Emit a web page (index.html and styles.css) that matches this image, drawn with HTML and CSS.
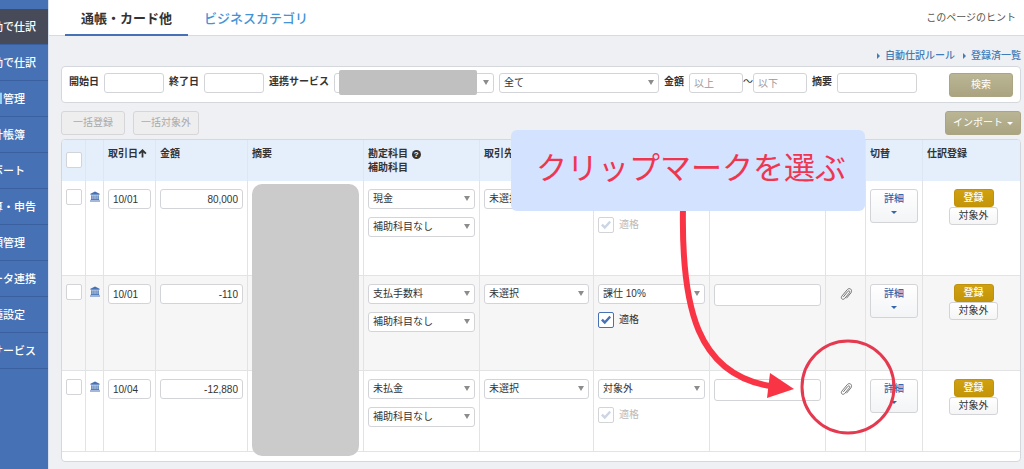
FILE: index.html
```html
<!DOCTYPE html>
<html lang="ja">
<head>
<meta charset="utf-8">
<title>自動で仕訳</title>
<link rel="stylesheet" href="styles.css">
</head>
<body>
<svg class="defs" aria-hidden="true">
  <symbol id="bank" viewBox="0 0 12 12"><path d="M6 0 11.500 2.600V4H.5V2.600zM1.500 4.500h1.600v4.700H1.500zM4 4.500h1.500v4.700H4zM6.500 4.500H8v4.700H6.500zM8.900 4.500h1.600v4.700H8.900zM1 9.400h10v.9H1zM0 10.800h12V12H0z"/></symbol>
  <symbol id="clip" viewBox="0 0 16 16"><path d="M5.600 10.600 9.800 5.400c1.200-1.300 2.700-.1 1.700 1.300l-4.800 5.800c-1.800 2-4.500 0-2.900-2.300l5.500-6.600c2.300-2.500 5.600.2 3.700 3.200l-4.300 5.200" fill="none" stroke="currentColor" stroke-width="1" stroke-linecap="round"/></symbol>
</svg>
<div class="app">
  <aside class="sidebar">
    <nav class="menu">
      <a class="menu-item active" href="#">自動で仕訳</a>
      <a class="menu-item" href="#">手動で仕訳</a>
      <a class="menu-item" href="#">取引管理</a>
      <a class="menu-item" href="#">会計帳簿</a>
      <a class="menu-item" href="#">レポート</a>
      <a class="menu-item" href="#">決算・申告</a>
      <a class="menu-item" href="#">書類管理</a>
      <a class="menu-item" href="#">データ連携</a>
      <a class="menu-item" href="#">各種設定</a>
      <a class="menu-item" href="#">他サービス</a>
    </nav>
  </aside>
  <main class="main">
    <header class="header">
      <nav class="tabs">
        <a class="tab current" href="#">通帳・カード他</a>
        <a class="tab" href="#">ビジネスカテゴリ</a>
      </nav>
      <a class="hint" href="#">このページのヒント</a>
    </header>
    <div class="content">
      <div class="links">
        <a href="#">自動仕訳ルール</a>
        <a href="#">登録済一覧</a>
      </div>
      <form class="panel filter">
        <label for="from">開始日</label><input class="field date-range" id="from" type="text">
        <label for="to">終了日</label><input class="field date-range" id="to" type="text">
        <label for="service">連携サービス</label>
        <span class="select wide"><select id="service"><option></option></select><span class="mask"></span></span>
        <span class="select wide"><select aria-label="口座"><option>全て</option></select></span>
        <label for="min">金額</label>
        <span class="range"><input class="field amount-range" id="min" type="text" placeholder="以上"><span>〜</span><input class="field amount-range" type="text" placeholder="以下" aria-label="金額以下"></span>
        <label for="summary">摘要</label><input class="field summary" id="summary" type="text">
        <button class="btn khaki search" type="button">検索</button>
      </form>
      <div class="toolbar">
        <button class="btn muted" type="button" disabled>一括登録</button>
        <button class="btn muted" type="button" disabled>一括対象外</button>
        <button class="btn khaki import" type="button">インポート<span class="caret"></span></button>
      </div>
      <div class="panel entries">
        <table>
          <colgroup><col class="c-check"><col class="c-icon"><col class="c-date"><col class="c-amount"><col><col class="c-wide"><col class="c-partner"><col class="c-wide"><col class="c-wide"><col class="c-clip"><col class="c-switch"><col class="c-register"></colgroup>
          <thead>
            <tr>
              <th class="check-head"><input class="check" type="checkbox" aria-label="全て選択"></th>
              <th></th>
              <th>取引日<svg class="sort" viewBox="0 0 10 10"><path d="M5 9.500V1.500M1.200 5.200 5 1.400l3.800 3.800" fill="none" stroke="currentColor" stroke-width="2"/></svg></th>
              <th>金額</th>
              <th>摘要</th>
              <th>勘定科目 <span class="help">?</span><br>補助科目</th>
              <th>取引先</th>
              <th></th>
              <th></th>
              <th></th>
              <th>切替</th>
              <th>仕訳登録</th>
            </tr>
          </thead>
          <tbody>
            <tr>
              <td><input class="check" type="checkbox" aria-label="選択"></td>
              <td class="center"><svg class="bank"><use href="#bank"/></svg></td>
              <td><input class="field" type="text" value="10/01" aria-label="取引日"></td>
              <td><input class="field number" type="text" value="80,000" aria-label="金額"></td>
              <td class="masked"><span class="summary-mask"></span></td>
              <td><div class="stack"><span class="select"><select aria-label="勘定科目"><option>現金</option></select></span><span class="select"><select aria-label="補助科目"><option>補助科目なし</option></select></span></div></td>
              <td><span class="select"><select aria-label="取引先"><option>未選択</option></select></span></td>
              <td><div class="stack"><span class="select"><select aria-label="税区分"><option></option></select></span><label class="eligible"><input class="check" type="checkbox" checked disabled>適格</label></div></td>
              <td><input class="field memo" type="text" aria-label="備考"></td>
              <td class="center"><button class="clip" type="button" aria-label="添付"><svg><use href="#clip"/></svg></button></td>
              <td><button class="detail" type="button">詳細<span class="caret"></span></button></td>
              <td class="center"><div class="actions"><button class="register" type="button">登録</button><button class="exclude" type="button">対象外</button></div></td>
            </tr>
            <tr>
              <td><input class="check" type="checkbox" aria-label="選択"></td>
              <td class="center"><svg class="bank"><use href="#bank"/></svg></td>
              <td><input class="field" type="text" value="10/01" aria-label="取引日"></td>
              <td><input class="field number" type="text" value="-110" aria-label="金額"></td>
              <td></td>
              <td><div class="stack"><span class="select"><select aria-label="勘定科目"><option>支払手数料</option></select></span><span class="select"><select aria-label="補助科目"><option>補助科目なし</option></select></span></div></td>
              <td><span class="select"><select aria-label="取引先"><option>未選択</option></select></span></td>
              <td><div class="stack"><span class="select"><select aria-label="税区分"><option>課仕 10%</option></select></span><label class="eligible"><input class="check" type="checkbox" checked>適格</label></div></td>
              <td><input class="field memo" type="text" aria-label="備考"></td>
              <td class="center"><button class="clip" type="button" aria-label="添付"><svg><use href="#clip"/></svg></button></td>
              <td><button class="detail" type="button">詳細<span class="caret"></span></button></td>
              <td class="center"><div class="actions"><button class="register" type="button">登録</button><button class="exclude" type="button">対象外</button></div></td>
            </tr>
            <tr>
              <td><input class="check" type="checkbox" aria-label="選択"></td>
              <td class="center"><svg class="bank"><use href="#bank"/></svg></td>
              <td><input class="field" type="text" value="10/04" aria-label="取引日"></td>
              <td><input class="field number" type="text" value="-12,880" aria-label="金額"></td>
              <td></td>
              <td><div class="stack"><span class="select"><select aria-label="勘定科目"><option>未払金</option></select></span><span class="select"><select aria-label="補助科目"><option>補助科目なし</option></select></span></div></td>
              <td><span class="select"><select aria-label="取引先"><option>未選択</option></select></span></td>
              <td><div class="stack"><span class="select"><select aria-label="税区分"><option>対象外</option></select></span><label class="eligible"><input class="check" type="checkbox" checked disabled>適格</label></div></td>
              <td><input class="field memo" type="text" aria-label="備考"></td>
              <td class="center"><button class="clip" type="button" aria-label="添付"><svg><use href="#clip"/></svg></button></td>
              <td><button class="detail" type="button">詳細<span class="caret"></span></button></td>
              <td class="center"><div class="actions"><button class="register" type="button">登録</button><button class="exclude" type="button">対象外</button></div></td>
            </tr>
          </tbody>
        </table>
      </div>
    </div>
  </main>
</div>
<svg class="arrow" viewBox="0 0 240 240" aria-hidden="true">
  <path d="M23 6C21 110 38 174 110 186" fill="none" stroke="#f93545" stroke-width="6"/>
  <path d="M110 173 134 189 107 198z" fill="#f93545"/>
  <circle cx="188" cy="187" r="46" fill="none" stroke="#e5394f" stroke-width="3"/>
</svg>
<div class="callout">クリップマークを選ぶ</div>
</body>
</html>
```

FILE: styles.css
```css
* { box-sizing: border-box; }

body {
  margin: 0;
  position: relative;
  background: #eff0f4;
  color: #333;
  font: 10px/14px "Liberation Sans", "Noto Sans CJK JP", sans-serif;
}

a { color: inherit; text-decoration: none; }
input, select, button { font: inherit; color: inherit; margin: 0; }
button { display: block; padding: 0; cursor: pointer; }

.defs { position: absolute; width: 0; height: 0; }

.app { display: flex; min-height: 100vh; }

/* Sidebar */
.sidebar {
  flex: none;
  width: 49px;
  padding-top: 9px;
  overflow: hidden;
  background: #4671b5;
  border-right: 1px solid #d8e0ee;
}
.menu { width: 80px; margin-left: -32px; }
.menu-item {
  display: block;
  height: 36px;
  padding-left: 13px;
  border-bottom: 1px solid #3a609f;
  color: #fff;
  font-size: 11px;
  font-weight: 500;
  line-height: 37px;
  white-space: nowrap;
}
.menu-item.active { background: #474b59; }

/* Header */
.main { flex: 1; min-width: 0; }
.header {
  display: flex;
  justify-content: space-between;
  height: 36px;
  padding: 0 8px 0 16px;
  background: #fff;
  border-bottom: 1px solid #d8dade;
}
.tabs { display: flex; }
.tab {
  height: 36px;
  padding: 0 16px;
  color: #4493d6;
  font-size: 13px;
  font-weight: 500;
  line-height: 38px;
}
.tab.current {
  border-bottom: 2px solid #4671b5;
  color: #333;
  font-weight: bold;
}
.hint { color: #555; line-height: 36px; }

.content { padding: 0 3px 7px 12px; }
.links {
  display: flex;
  justify-content: flex-end;
  gap: 8px;
  padding-top: 10px;
  color: #3f7cb8;
  font-weight: 500;
  line-height: 20px;
}
.links a { display: flex; align-items: center; gap: 5px; }
.links a::before {
  content: "";
  border: 3px solid transparent;
  border-left-color: #3f7cb8;
  border-right: 0;
}

.panel {
  background: #fff;
  border: 1px solid #d4d7dc;
  border-radius: 4px;
}

/* Form controls */
.field, .select select {
  width: 100%;
  height: 20px;
  padding: 0 4px;
  background: #fff;
  border: 1px solid #d2d4d8;
  border-radius: 3px;
}
.field::placeholder { color: #999; opacity: 1; }
.number { text-align: right; }
.select { position: relative; display: block; }
.select select { display: block; appearance: none; }
.select::after {
  content: "";
  position: absolute;
  top: 7px;
  right: 5px;
  border: 3px solid transparent;
  border-top: 5px solid #8c8c8c;
  border-bottom: 0;
  pointer-events: none;
}
.mask {
  position: absolute;
  inset: -3px 17px -2px 5px;
  background: #c0c0c0;
  border-radius: 2px;
}
.caret {
  border: 3px solid transparent;
  border-top-color: currentColor;
  border-bottom: 0;
}

/* Filter */
.filter {
  display: flex;
  align-items: flex-start;
  gap: 5px;
  padding: 6px 7px 5px;
}
.filter label { font-weight: bold; line-height: 18px; white-space: nowrap; }
.filter .date-range { width: 60px; }
.filter .wide { width: 160px; }
.range { display: flex; line-height: 18px; }
.filter .amount-range { width: 54px; }
.filter .summary { width: 80px; }

.btn {
  height: 24px;
  padding: 0 12px;
  border-radius: 3px;
  white-space: nowrap;
}
.khaki {
  border: 1px solid #aba583;
  background: linear-gradient(#bab594, #aaa481);
  color: #fff;
}
.muted {
  border: 1px solid #d6d6d8;
  background: #eeeeef;
  color: #aaa;
}
.search { width: 64px; margin-left: auto; }

.toolbar { display: flex; gap: 8px; padding: 8px 0 4px; }
.toolbar .muted { min-width: 64px; padding: 0 7px; }
.import {
  display: flex;
  align-items: center;
  gap: 4px;
  margin-left: auto;
  padding: 0 7px;
}

/* Entries */
.entries { padding-bottom: 9px; }
table { width: 100%; table-layout: fixed; border-collapse: separate; border-spacing: 0; }
.c-check { width: 24px; }
.c-icon { width: 18px; }
.c-date { width: 52px; }
.c-amount { width: 92px; }
.c-wide { width: 116px; }
.c-partner { width: 114px; }
.c-clip { width: 40px; }
.c-switch { width: 57px; }
.c-register { width: 97px; }

th {
  height: 41px;
  padding: 7px 4px 0;
  background: #e5effc;
  border-right: 1px solid #dde7f4;
  text-align: left;
  vertical-align: top;
  white-space: nowrap;
}
th:first-child { border-radius: 3px 0 0 0; }
th:last-child { border-radius: 0 3px 0 0; }
td {
  height: 95px;
  padding: 8px 4px 0;
  border-right: 1px solid #e2e3e5;
  border-bottom: 1px solid #e2e3e5;
  vertical-align: top;
}
th:last-child, td:last-child { border-right: 0; }
tbody tr:nth-child(even) { background: #f6f6f6; }
tbody tr:last-child td { height: 81px; }
.check-head { padding-top: 12px; }
.center { padding-left: 0; padding-right: 0; text-align: center; }

.sort { width: 9px; height: 9px; vertical-align: -1px; }
.help {
  display: inline-block;
  width: 9px;
  height: 9px;
  margin-left: 1px;
  border-radius: 50%;
  background: #333;
  color: #fff;
  font-size: 8px;
  line-height: 9px;
  text-align: center;
}

.check {
  display: block;
  flex: none;
  width: 16px;
  height: 16px;
  appearance: none;
  background: #fff;
  border: 1px solid #d2d4d8;
  border-radius: 2px;
}
.check:checked {
  display: grid;
  place-items: center;
  border-color: #4671b5;
}
.check:checked::before {
  content: "";
  width: 10px;
  height: 10px;
  background: #4671b5;
  clip-path: polygon(0 55%, 18% 38%, 38% 58%, 84% 8%, 100% 24%, 38% 92%);
}
.check:disabled { border-color: #d2d4d8; }
.check:disabled::before { background: #ccd5e4; }
.eligible { display: flex; align-items: center; gap: 5px; }
.eligible:has(:disabled) { color: #bbb; }

.stack { display: flex; flex-direction: column; gap: 8px; }
.bank { width: 10px; height: 11px; margin-top: 2px; fill: #4671b5; }
.memo { height: 22px; }
.clip {
  width: 16px;
  height: 16px;
  margin: 2px auto 0;
  border: 0;
  background: none;
  color: #777;
}
.clip svg { display: block; width: 16px; height: 16px; }

.detail {
  display: flex;
  flex-direction: column;
  align-items: center;
  gap: 5px;
  width: 100%;
  height: 34px;
  padding-top: 2px;
  border: 1px solid #d2d4d8;
  border-radius: 3px;
  background: linear-gradient(#fff, #f3f4f6);
  color: #3565ad;
  font-weight: 500;
}
.actions { display: flex; flex-direction: column; align-items: center; padding-left: 4px; }
.register, .exclude { height: 18px; border-radius: 3px; line-height: 16px; }
.register {
  width: 40px;
  border: 1px solid #c0920c;
  background: linear-gradient(#d0a010, #c39508);
  color: #fff;
  font-weight: 500;
}
.exclude {
  width: 49px;
  border: 1px solid #d2d4d8;
  background: linear-gradient(#fff, #f5f5f6);
}

/* Mask spanning the summary column */
.masked { position: relative; }
.summary-mask {
  position: absolute;
  z-index: 1;
  top: 3px;
  left: 4px;
  right: 4px;
  height: 272px;
  border-radius: 10px;
  background: #cbcbcb;
}

/* Annotations over the page */
.callout {
  position: absolute;
  z-index: 3;
  top: 130px;
  left: 511px;
  padding: 14px 19px 18px 25px;
  border-radius: 6px;
  background: #d3e2ff;
  color: #ee3650;
  font-size: 31px;
  font-weight: 400;
  line-height: 49px;
  white-space: nowrap;
}
.arrow {
  position: absolute;
  z-index: 2;
  top: 200px;
  left: 660px;
  width: 240px;
  height: 240px;
  pointer-events: none;
}
```
